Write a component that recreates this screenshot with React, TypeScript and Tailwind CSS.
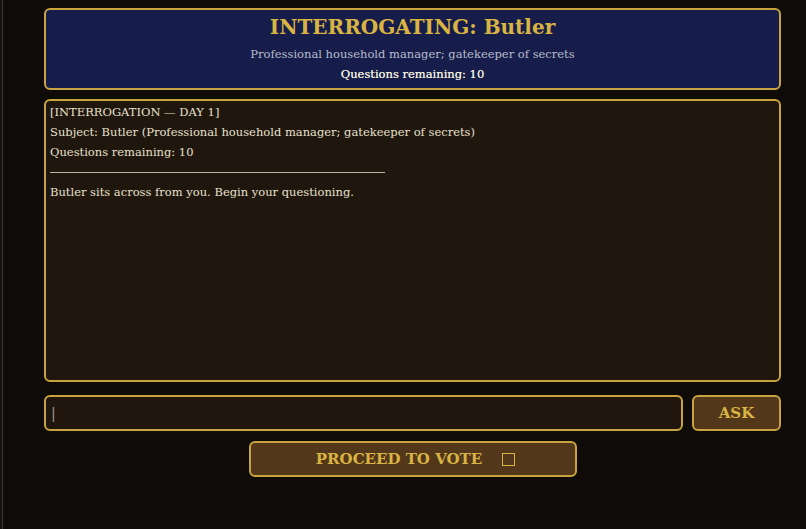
import { useState } from "react";

const serif = { fontFamily: '"DejaVu Serif", "Liberation Serif", serif' };

function Header() {
  return (
    <div className="flex h-[82px] flex-col items-center rounded-md border-2 border-[#c9a33f] bg-[#161d4a] pt-[2px]">
      <h1 className="text-[20px] font-bold leading-[30px] text-[#d9b443]">INTERROGATING: Butler</h1>
      <p className="mt-[3px] text-[11.5px] leading-[18px] text-[#b9bccb]">Professional household manager; gatekeeper of secrets</p>
      <p className="mt-[2px] text-[11.5px] leading-[18px] text-[#f0ebdd] [text-shadow:0_0_0.4px_#f0ebdd]">Questions remaining: 10</p>
    </div>
  );
}

function Log() {
  return (
    <div className="h-[283px] rounded-md border-2 border-[#c9a33f] bg-[#1f160e] px-[4px] pt-[1px] text-[11.5px] leading-[20px] text-[#e8e0cd]">
      <p>[INTERROGATION — DAY 1]</p>
      <p>Subject: Butler (Professional household manager; gatekeeper of secrets)</p>
      <p>Questions remaining: 10</p>
      <div className="flex h-[20px] items-center">
        <div className="w-[335px] border-t border-[#bdb4a2]" />
      </div>
      <p>Butler sits across from you. Begin your questioning.</p>
    </div>
  );
}

export default function App() {
  const [question, setQuestion] = useState("");

  return (
    <div className="flex min-h-[529px] w-full bg-[#0f0b08]" style={serif}>
      {/* edge of the side panel */}
      <div className="w-[3px] shrink-0 border-r border-[#3a3836] bg-[#141210]" />
      <div className="ml-[41px] mr-[25px] flex flex-1 flex-col pt-[8px]">
        <Header />
        <div className="mt-[9px]">
          <Log />
        </div>
        <div className="mt-[13px] flex gap-[9px]">
          <div className="flex h-[36px] flex-1 items-center rounded-md border-2 border-[#c9a33f] bg-[#21160d] px-[5px]">
            <span className="text-[14px] text-[#a29b90]">|</span>
            <input
              value={question}
              onChange={(e) => setQuestion(e.target.value)}
              className="flex-1 bg-transparent text-[13px] text-[#e6dfcf] outline-none"
            />
          </div>
          <button className="h-[36px] w-[89px] rounded-md border-2 border-[#c9a33f] bg-[#53371b] text-[15px] font-bold text-[#d9b443]">
            ASK
          </button>
        </div>
        <div className="mt-[10px] flex justify-center">
          <button className="flex h-[36px] w-[328px] items-center justify-center gap-[20px] rounded-md border-2 border-[#c9a33f] bg-[#53371b] pl-[6px] text-[15px] font-bold text-[#d9b443]">
            <span>PROCEED TO VOTE</span>
            <span className="inline-block h-[13px] w-[13px] border-[1.5px] border-[#d9b443]" />
          </button>
        </div>
      </div>
    </div>
  );
}
